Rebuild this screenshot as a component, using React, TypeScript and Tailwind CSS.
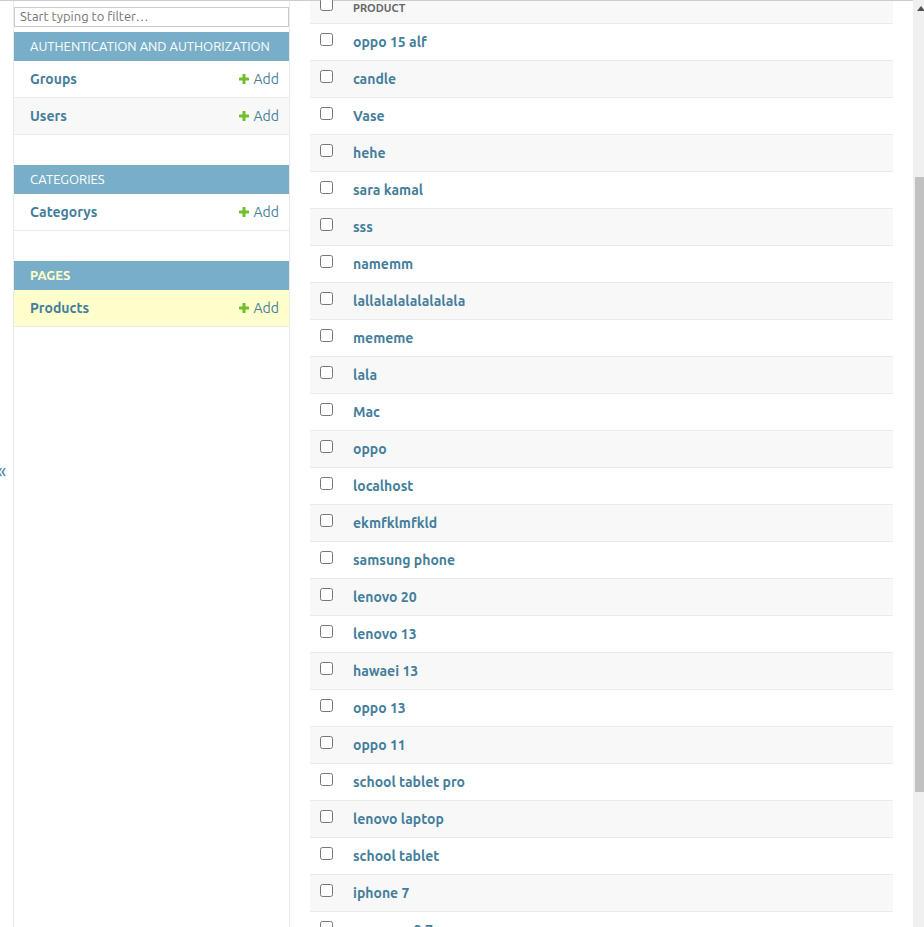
import React from "react";

const products = [
  "oppo 15 alf",
  "candle",
  "Vase",
  "hehe",
  "sara kamal",
  "sss",
  "namemm",
  "lallalalalalalalala",
  "mememe",
  "lala",
  "Mac",
  "oppo",
  "localhost",
  "ekmfklmfkld",
  "samsung phone",
  "lenovo 20",
  "lenovo 13",
  "hawaei 13",
  "oppo 13",
  "oppo 11",
  "school tablet pro",
  "lenovo laptop",
  "school tablet",
  "iphone 7",
  "samsung 9 7",
];

function Plus() {
  return (
    <svg width="10" height="10" viewBox="0 0 10 10" className="shrink-0">
      <rect x="3.5" y="0" width="3" height="10" rx="0.6" fill="#70bf2b" />
      <rect x="0" y="3.5" width="10" height="3" rx="0.6" fill="#70bf2b" />
    </svg>
  );
}

function NavRow({ label, alt, current }: { label: string; alt?: boolean; current?: boolean }) {
  const bg = current ? "bg-[#ffffcc]" : alt ? "bg-[#f8f8f8]" : "bg-white";
  return (
    <div className={`flex h-[37px] items-center justify-between border-b border-[#eaeaea] pl-[16px] pr-[10px] ${bg}`}>
      <span className="text-[14px] font-bold text-[#447e9b]">{label}</span>
      <span className="flex items-center gap-[5px] text-[14px] text-[#447e9b]">
        <span className="ml-[1px]">
          <Plus />
        </span>
        Add
      </span>
    </div>
  );
}

function Caption({ label, current }: { label: string; current?: boolean }) {
  return (
    <div
      className={`flex h-[29px] items-center bg-[#79aec8] pl-[16px] text-[13px] uppercase ${
        current ? "font-bold text-[#ffffcc]" : "text-white"
      }`}
    >
      {label}
    </div>
  );
}

export default function App() {
  return (
    <div
      className="flex h-[927px] w-[924px] overflow-hidden bg-white"
      style={{ fontFamily: "Ubuntu, Lato, 'Open Sans', sans-serif" }}
    >
      <div className="flex min-w-0 flex-1 flex-col border-t border-[#cccccc]">
        <div className="flex min-h-0 flex-1">
          {/* toggle strip */}
          <div className="flex w-[14px] shrink-0 items-center border-r border-[#eaeaea] pt-[14px]">
            <span className="-ml-[3px] text-[20px] leading-none text-[#447e9b]">«</span>
          </div>
          {/* sidebar */}
          <div className="w-[276px] shrink-0 border-r border-[#eaeaea] pt-[1px]">
            <div className="mb-[5px] mt-[5px] flex h-[20px] items-center border border-[#cccccc] px-[5px] text-[13px] text-[#757575]">
              Start typing to filter…
            </div>
            <div className="mb-[30px]">
              <Caption label="Authentication and Authorization" />
              <NavRow label="Groups" />
              <NavRow label="Users" alt />
            </div>
            <div className="mb-[30px]">
              <Caption label="Categories" />
              <NavRow label="Categorys" />
            </div>
            <div>
              <Caption label="Pages" current />
              <NavRow label="Products" current />
            </div>
          </div>
          {/* content */}
          <div className="min-w-0 flex-1 px-[20px]">
            <div className="flex h-[23px] items-start border-b border-[#eaeaea] bg-[#f8f8f8]">
              <div className="flex w-[43px] shrink-0 pl-[10px]">
                <input type="checkbox" className="-mt-[3px] m-0 h-[13px] w-[13px]" readOnly />
              </div>
              <span className="-mt-[1px] text-[11px] font-bold uppercase leading-[16px] text-[#666666]">
                Product
              </span>
            </div>
            {products.map((p, i) => (
              <div
                key={i}
                className={`flex h-[37px] items-center border-b border-[#eaeaea] ${
                  i % 2 === 1 ? "bg-[#f8f8f8]" : "bg-white"
                }`}
              >
                <div className="flex w-[43px] shrink-0 self-start pl-[10px] pt-[9px]">
                  <input type="checkbox" className="m-0 h-[13px] w-[13px]" readOnly />
                </div>
                <span className="text-[14px] font-bold text-[#447e9b]">{p}</span>
              </div>
            ))}
          </div>
        </div>
      </div>
      {/* fake scrollbar */}
      <div className="relative w-[11px] shrink-0 bg-[#f0f0f0]">
        <svg width="8" height="5" viewBox="0 0 8 5" className="absolute left-[4px] top-[6px]">
          <polygon points="4,0 8,5 0,5" fill="#505050" />
        </svg>
        <div className="absolute left-[2px] right-0 top-[177px] h-[615px] bg-[#c1c1c1]" />
      </div>
    </div>
  );
}
